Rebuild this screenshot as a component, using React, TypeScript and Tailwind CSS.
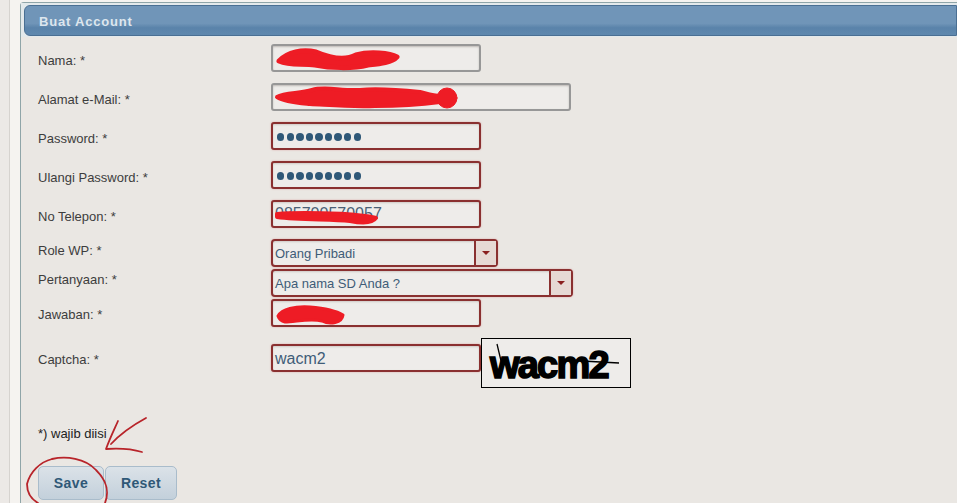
const errorBox = "border-2 border-[#8a3030] shadow-[0_0_2px_#dba5a5,inset_0_1px_2px_#cfcac6]";
const plainBox = "border-2 border-[#979797] shadow-[inset_0_1px_2px_#bdb9b5]";

function Field({ label, labelClass, children, rowClass }: { label: string; labelClass: string; children: React.ReactNode; rowClass: string }) {
  return (
    <div className={`flex items-start ${rowClass}`}>
      <label className={`w-[233px] shrink-0 text-[13px] leading-[14px] text-[#3d3d3d] ${labelClass}`}>{label}</label>
      {children}
    </div>
  );
}

function TextBox({ width, error, children }: { width: string; error?: boolean; children?: React.ReactNode }) {
  return (
    <div className={`${width} flex h-[28px] items-center rounded-[3px] bg-[#eeecea] px-[2px] text-[#3f5c78] ${error ? errorBox : plainBox}`}>
      {children}
    </div>
  );
}

function Dots() {
  return (
    <div className="mt-[2px] flex gap-[2.2px] pl-[2px]">
      {Array.from({ length: 9 }).map((_, i) => (
        <span key={i} className="h-[7.4px] w-[7.4px] rounded-full bg-[#2f5878]" />
      ))}
    </div>
  );
}

function SelectBox({ width, children }: { width: string; children: React.ReactNode }) {
  return (
    <div className={`${width} flex h-[28px] items-stretch rounded-[4px] bg-[#eeecea] ${errorBox}`}>
      <div className="flex flex-1 items-center px-[2px] pt-[1px] text-[13px] text-[#3f5c78]">{children}</div>
      <div className="flex w-[22px] items-center justify-center border-l-2 border-[#8a3030] bg-[#e6d9d4]">
        <span className="h-0 w-0 border-x-[4px] border-t-[4px] border-x-transparent border-t-[#8a1f1f]" />
      </div>
    </div>
  );
}

export default function App() {
  return (
    <div className="relative flex h-[503px] w-[957px] overflow-hidden bg-[#f5f3f0] font-['Liberation_Sans',Arial,sans-serif]">
      <div className="w-[10px] shrink-0 border-r border-[#d6d3cf] bg-[#ece9e6]" />
      <div className="w-[10px] shrink-0" />

      <div className="mt-[2px] flex-1 rounded-tl-[4px] border-l border-t border-[#8fa5a8] bg-[#eae7e3]">
        <div className="bg-[#e3e9eb] pb-[1px] pl-[3px] pt-[2px]">
          <div className="flex h-[31px] items-center rounded-l-[6px] border border-[#4a6f93] bg-[linear-gradient(#7095b8_0%,#7095b8_60%,#5a83aa_75%,#5f88ae_100%)] pl-[14px]">
            <h1 className="pt-[3px] text-[13px] font-bold tracking-[0.8px] text-[#dde6ee]">Buat Account</h1>
          </div>
        </div>

        <form className="pl-[17px] pt-[7px]">
          <Field label="Nama: *" labelClass="pt-[10px]" rowClass="mb-[11px]">
            <TextBox width="w-[210px]" />
          </Field>
          <Field label="Alamat e-Mail: *" labelClass="pt-[10px]" rowClass="mb-[11px]">
            <TextBox width="w-[300px]" />
          </Field>
          <Field label="Password: *" labelClass="pt-[10px]" rowClass="mb-[11px]">
            <TextBox width="w-[210px]" error><Dots /></TextBox>
          </Field>
          <Field label="Ulangi Password: *" labelClass="pt-[10px]" rowClass="mb-[11px]">
            <TextBox width="w-[210px]" error><Dots /></TextBox>
          </Field>
          <Field label="No Telepon: *" labelClass="pt-[10px]" rowClass="mb-[11px]">
            <TextBox width="w-[210px]" error>
              <span className="text-[16px] text-[#4a6075]">085700570057</span>
            </TextBox>
          </Field>
          <Field label="Role WP: *" labelClass="pt-[5px]" rowClass="mb-[2px]">
            <SelectBox width="w-[227px]">Orang Pribadi</SelectBox>
          </Field>
          <Field label="Pertanyaan: *" labelClass="pt-[4px]" rowClass="mb-[2px]">
            <SelectBox width="w-[302px]">Apa nama SD Anda ?</SelectBox>
          </Field>
          <Field label="Jawaban: *" labelClass="pt-[9px]" rowClass="mb-[11px]">
            <TextBox width="w-[210px]" error />
          </Field>

          <Field label="Captcha: *" labelClass="pt-[15px]" rowClass="">
            <div className="mt-[6px]">
              <TextBox width="w-[210px]" error>
                <span className="pt-[2px] text-[16px]">wacm2</span>
              </TextBox>
            </div>
            <div className="relative flex h-[50px] w-[150px] items-center border border-black bg-[#eeecea] pl-[8px]">
              <span className="pt-[3px] text-[38px] font-bold leading-none tracking-[-1.8px] text-black [-webkit-text-stroke:1.6px_black]">wacm2</span>
              <svg className="absolute inset-0" width="150" height="50" viewBox="0 0 150 50" fill="none">
                <path d="M15 5 L20 26 M100 22 L137 24" stroke="#000" strokeWidth="1.3" />
              </svg>
            </div>
          </Field>

          <p className="mt-[39px] text-[13px] leading-[14px] text-[#222]">*) wajib diisi</p>

          <div className="mt-[25px] flex gap-[1px]">
            <button type="button" className="h-[34px] w-[66px] rounded-[5px] border border-[#a9bccb] bg-[linear-gradient(#dbe2e8,#c3d0db)] text-[14px] font-bold tracking-[0.4px] text-[#2f5877]">Save</button>
            <button type="button" className="h-[34px] w-[72px] rounded-[5px] border border-[#a9bccb] bg-[linear-gradient(#dbe2e8,#c3d0db)] text-[14px] font-bold tracking-[0.4px] text-[#2f5877]">Reset</button>
          </div>
        </form>
      </div>

      {/* hand drawn marks on top of the form */}
      <svg className="pointer-events-none absolute inset-0" width="957" height="503" viewBox="0 0 957 503" fill="none" strokeLinecap="round" strokeLinejoin="round">
        <g stroke="#ee1c25" fill="#ee1c25">
          <path d="M279 61 C288 52 302 49 316 52 C330 58 345 61 356 55 C370 51 390 53 397 57 C392 63 378 64 368 65 C352 69 330 68 315 65 C303 63 290 66 279 61Z" strokeWidth="5" />
          <path d="M277 97 C285 92 300 94 312 90 C325 86 340 91 360 90 C380 88 400 90 420 92 C428 94 434 96 440 96 L440 102 C425 104 400 106 375 106 C350 107 330 105 310 104 C300 103 285 102 277 97Z" strokeWidth="4" />
          <circle cx="447" cy="98" r="10" strokeWidth="1" />
          <path d="M277 214 C300 212 320 213 345 214 C355 215 370 216 376 218 C372 224 360 223 350 221 C330 219 300 220 277 217Z" strokeWidth="4" />
          <path d="M278 316 C282 309 295 306 310 307 C322 308 335 310 343 315 C342 323 330 325 322 321 C310 318 295 322 285 322 C281 321 279 319 278 316Z" strokeWidth="3" />
        </g>
        <g stroke="#b8242a" strokeWidth="1.8">
          <path d="M146 418 C135 424 122 432 111 444 M118 421 C114 430 110 438 106 449 C120 448 132 449 142 452" />
          <path d="M52 459 C40 462 30 472 27 484 C27 492 31 499 38 503 M52 459 C66 456 85 458 96 470 C106 480 110 490 105 503" />
        </g>
      </svg>
    </div>
  );
}
